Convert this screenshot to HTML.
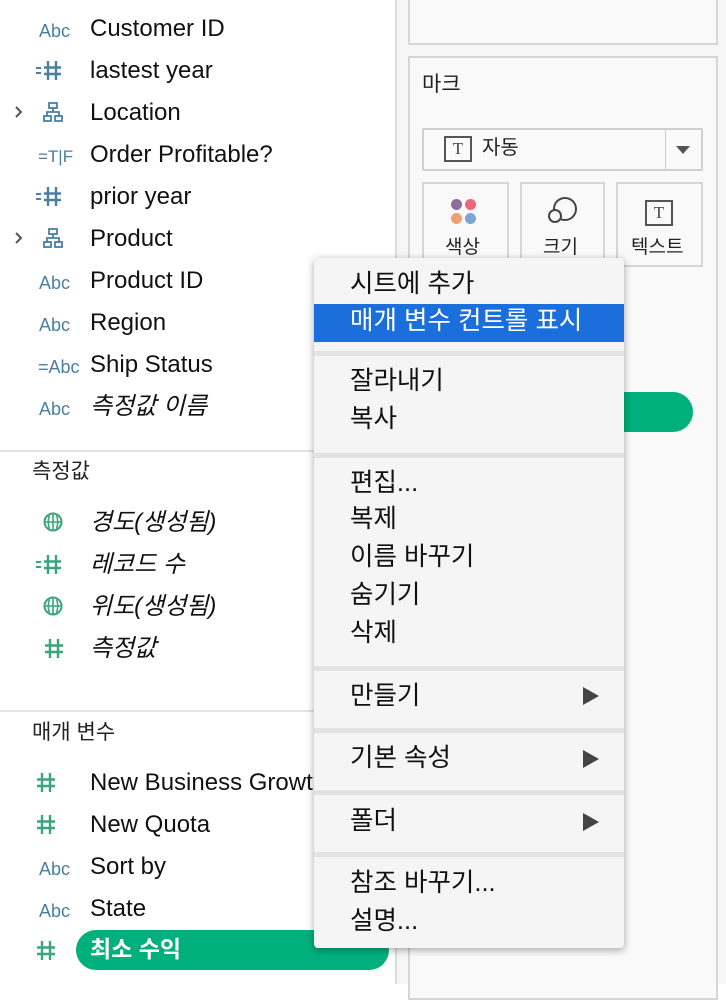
<!DOCTYPE html>
<html><head><meta charset="utf-8"><style>
body{margin:0;width:726px;height:984px;overflow:hidden;background:#fff;position:relative;font-family:"Liberation Sans","Noto Sans CJK KR",sans-serif;}
.a{position:absolute;white-space:nowrap;}
.t{font-size:24px;color:#111;line-height:30px;margin-top:2px;}
.i{font-size:18px;line-height:30px;color:#4a7fa0;text-align:right;width:32px;left:38px;margin-top:2px;}
.it{font-style:italic;}
.m{font-size:25.5px;color:#111;line-height:30px;left:350px;}
.sep{position:absolute;left:314px;width:310px;height:5px;background:#e3e3e3;}
</style></head><body>
<svg width="0" height="0" style="position:absolute">
<defs>
<g id="hash"><path d="M6 1V20M14 1V20M1 7.5H19M1 14H19" stroke-width="2.4" fill="none"/></g>
<g id="eqhash"><path d="M0 8H5M0 13H5" stroke-width="2" fill="none"/><path d="M12 1V20M20 1V20M8 7.5H25M8 14H25" stroke-width="2.4" fill="none"/></g>
<g id="globe"><circle cx="10" cy="10" r="8.5" fill="none" stroke-width="2"/><path d="M2 10H18M10 2V18M6.5 3.5Q4 10 6.5 16.5M13.5 3.5Q16 10 13.5 16.5" fill="none" stroke-width="1.6"/></g>
<g id="hier"><rect x="6" y="1" width="8" height="5" fill="none" stroke-width="1.8"/><rect x="1" y="14" width="7" height="5" fill="none" stroke-width="1.8"/><rect x="12" y="14" width="7" height="5" fill="none" stroke-width="1.8"/><path d="M10 6V10M4 14V10H16V14" fill="none" stroke-width="1.8"/></g>
<g id="chev"><path d="M2 1L7 6L2 11" fill="none" stroke="#555" stroke-width="2"/></g>
</defs></svg>
<div class="a" style="left:395px;top:0;width:331px;height:984px;background:#f6f6f6;border-left:2px solid #dcdcdc;"></div>
<div class="a" style="left:408px;top:-2px;width:306px;height:43px;border:2px solid #d6d6d6;background:#f9f9f9;"></div>
<div class="a" style="left:408px;top:56px;width:306px;height:940px;border:2px solid #d6d6d6;background:#f9f9f9;"></div>
<div class="a" style="left:422px;top:70px;font-size:21px;line-height:30px;color:#222;">마크</div>
<div class="a" style="left:422px;top:128px;width:277px;height:39px;border:2px solid #cfcfcf;background:#fafafa;border-radius:2px;"></div>
<div class="a" style="left:665px;top:130px;width:1px;height:39px;background:#ccc;"></div>
<div class="a" style="left:676px;top:146px;width:0;height:0;border-left:7px solid transparent;border-right:7px solid transparent;border-top:8px solid #555;"></div>
<div class="a" style="left:444px;top:136px;width:24px;height:22px;border:2px solid #555;font-family:'Liberation Serif',serif;font-size:17px;line-height:22px;text-align:center;color:#444;">T</div>
<div class="a" style="left:482px;top:133px;font-size:20px;line-height:30px;color:#222;">자동</div>
<div class="a" style="left:422px;top:182px;width:83px;height:90px;border:2px solid #d6d6d6;"></div>
<div class="a" style="left:520px;top:182px;width:81px;height:90px;border:2px solid #d6d6d6;"></div>
<div class="a" style="left:616px;top:182px;width:83px;height:81px;border:2px solid #d6d6d6;"></div>
<div class="a" style="left:451px;top:199px;width:11px;height:11px;border-radius:50%;background:#8a6f9c;"></div>
<div class="a" style="left:465px;top:199px;width:11px;height:11px;border-radius:50%;background:#ee6677;"></div>
<div class="a" style="left:451px;top:213px;width:11px;height:11px;border-radius:50%;background:#f0a070;"></div>
<div class="a" style="left:465px;top:213px;width:11px;height:11px;border-radius:50%;background:#7aa6d0;"></div>
<svg class="a" style="left:546px;top:196px" width="34" height="30"><circle cx="19" cy="13" r="11" fill="none" stroke="#444" stroke-width="2"/><circle cx="9" cy="20" r="6" fill="#f9f9f9" stroke="#444" stroke-width="2"/></svg>
<div class="a" style="left:645px;top:200px;width:24px;height:22px;border:2px solid #555;font-family:'Liberation Serif',serif;font-size:17px;line-height:22px;text-align:center;color:#444;">T</div>
<div class="a" style="left:445px;top:234px;font-size:19px;line-height:28px;color:#222;">색상</div>
<div class="a" style="left:543px;top:234px;font-size:19px;line-height:28px;color:#222;">크기</div>
<div class="a" style="left:631px;top:234px;font-size:19px;line-height:28px;color:#222;">텍스트</div>
<div class="a" style="left:475px;top:392px;width:218px;height:40px;border-radius:20px;background:#00b07c;"></div>

<!-- left list -->
<div class="a i" style="top:14px">Abc</div><div class="a t" style="left:90px;top:12px">Customer ID</div>
<svg class="a" style="left:36px;top:60px" width="28" height="22" stroke="#4a7fa0"><use href="#eqhash"/></svg><div class="a t" style="left:90px;top:54px">lastest year</div>
<svg class="a" style="left:14px;top:106px" width="10" height="12"><use href="#chev"/></svg><svg class="a" style="left:43px;top:102px" width="20" height="20" stroke="#4a7fa0"><use href="#hier"/></svg><div class="a t" style="left:90px;top:96px">Location</div>
<div class="a i" style="top:140px;font-size:17px">=T|F</div><div class="a t" style="left:90px;top:138px">Order Profitable?</div>
<svg class="a" style="left:36px;top:186px" width="28" height="22" stroke="#4a7fa0"><use href="#eqhash"/></svg><div class="a t" style="left:90px;top:180px">prior year</div>
<svg class="a" style="left:14px;top:232px" width="10" height="12"><use href="#chev"/></svg><svg class="a" style="left:43px;top:228px" width="20" height="20" stroke="#4a7fa0"><use href="#hier"/></svg><div class="a t" style="left:90px;top:222px">Product</div>
<div class="a i" style="top:266px">Abc</div><div class="a t" style="left:90px;top:264px">Product ID</div>
<div class="a i" style="top:308px">Abc</div><div class="a t" style="left:90px;top:306px">Region</div>
<div class="a i" style="top:350px">=Abc</div><div class="a t" style="left:90px;top:348px">Ship Status</div>
<div class="a i" style="top:392px">Abc</div><div class="a t it" style="left:90px;top:390px">측정값 이름</div>
<div class="a" style="left:0;top:450px;width:395px;height:2px;background:#e4e4e4;"></div>
<div class="a" style="left:32px;top:457px;font-size:21px;line-height:30px;color:#222;">측정값</div>
<svg class="a" style="left:43px;top:512px" width="20" height="20" stroke="#3aa57a"><use href="#globe"/></svg><div class="a t it" style="left:90px;top:506px">경도(생성됨)</div>
<svg class="a" style="left:36px;top:554px" width="28" height="22" stroke="#3aa57a"><use href="#eqhash"/></svg><div class="a t it" style="left:90px;top:548px">레코드 수</div>
<svg class="a" style="left:43px;top:596px" width="20" height="20" stroke="#3aa57a"><use href="#globe"/></svg><div class="a t it" style="left:90px;top:590px">위도(생성됨)</div>
<svg class="a" style="left:44px;top:638px" width="20" height="21" stroke="#3aa57a"><use href="#hash"/></svg><div class="a t it" style="left:90px;top:632px">측정값</div>
<div class="a" style="left:0;top:710px;width:395px;height:2px;background:#e4e4e4;"></div>
<div class="a" style="left:32px;top:718px;font-size:21px;line-height:30px;color:#222;">매개 변수</div>
<svg class="a" style="left:36px;top:772px" width="20" height="21" stroke="#3aa57a"><use href="#hash"/></svg><div class="a t" style="left:90px;top:766px">New Business Growth</div>
<svg class="a" style="left:36px;top:814px" width="20" height="21" stroke="#3aa57a"><use href="#hash"/></svg><div class="a t" style="left:90px;top:808px">New Quota</div>
<div class="a i" style="top:852px">Abc</div><div class="a t" style="left:90px;top:850px">Sort by</div>
<div class="a i" style="top:894px">Abc</div><div class="a t" style="left:90px;top:892px">State</div>
<svg class="a" style="left:36px;top:940px" width="20" height="21" stroke="#3aa57a"><use href="#hash"/></svg>
<div class="a" style="left:76px;top:930px;width:313px;height:40px;border-radius:20px;background:#00b07c;"></div>
<div class="a" style="left:90px;top:934px;font-size:23px;line-height:30px;color:#fff;font-weight:bold;">최소 수익</div>

<!-- menu -->
<div class="a" style="left:314px;top:258px;width:310px;height:690px;background:#f5f5f5;border-radius:4px;box-shadow:0 2px 8px rgba(0,0,0,.35);"></div>
<div class="a" style="left:314px;top:304px;width:310px;height:38px;background:#1a6fdc;"></div>
<div class="a m" style="top:269px">시트에 추가</div>
<div class="a m" style="top:306px;color:#fff">매개 변수 컨트롤 표시</div>
<div class="sep" style="top:351px"></div>
<div class="a m" style="top:366px">잘라내기</div>
<div class="a m" style="top:404px">복사</div>
<div class="sep" style="top:453px"></div>
<div class="a m" style="top:468px">편집...</div>
<div class="a m" style="top:504px">복제</div>
<div class="a m" style="top:542px">이름 바꾸기</div>
<div class="a m" style="top:580px">숨기기</div>
<div class="a m" style="top:618px">삭제</div>
<div class="sep" style="top:666px"></div>
<div class="a m" style="top:681px">만들기</div>
<div class="sep" style="top:728px"></div>
<div class="a m" style="top:743px">기본 속성</div>
<div class="sep" style="top:790px"></div>
<div class="a m" style="top:806px">폴더</div>
<div class="sep" style="top:852px"></div>
<div class="a m" style="top:868px">참조 바꾸기...</div>
<div class="a m" style="top:906px">설명...</div>
<div class="a" style="left:583px;top:687px;border-top:9px solid transparent;border-bottom:9px solid transparent;border-left:16px solid #444;"></div>
<div class="a" style="left:583px;top:750px;border-top:9px solid transparent;border-bottom:9px solid transparent;border-left:16px solid #444;"></div>
<div class="a" style="left:583px;top:813px;border-top:9px solid transparent;border-bottom:9px solid transparent;border-left:16px solid #444;"></div>
</body></html>
